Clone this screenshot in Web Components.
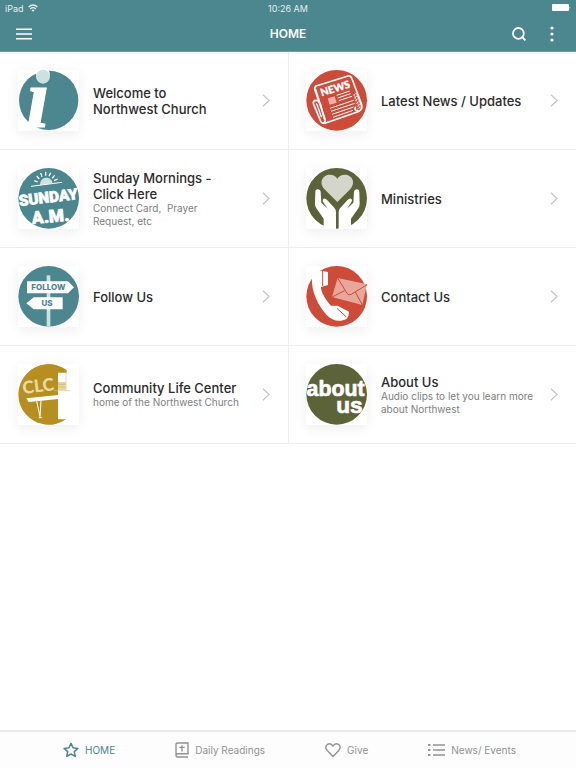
<!DOCTYPE html>
<html lang="en">
<head>
<meta charset="utf-8">
<meta name="viewport" content="width=device-width, initial-scale=1">
<title>Home</title>
<style>
  body {
    margin: 0;
    background: #fff;
    font-family: Inter, "Liberation Sans", sans-serif;
  }
</style>
</head>
<body>
<church-app>
  <status-bar slot="top" device="iPad" time="10:26 AM"></status-bar>
  <nav-bar slot="top">HOME</nav-bar>

  <home-tile href="#welcome">
    <svg slot="icon" viewBox="0 0 183 183" aria-hidden="true">
      <circle cx="92" cy="91" r="89" fill="#4c868e"/>
      <text x="24" y="172" font-family="Liberation Serif, serif" font-weight="700" font-style="italic" font-size="255" fill="#fff" stroke="#fff" stroke-width="3">i</text>
      <circle cx="75" cy="20" r="21" fill="#cfe0e3"/>
    </svg>
    Welcome to<br>Northwest Church
  </home-tile>

  <home-tile href="#news">
    <svg slot="icon" viewBox="0 0 183 183" aria-hidden="true">
      <circle cx="92" cy="91" r="91" fill="#cd4b39"/>
      <g fill="none" stroke="#fff" stroke-width="5" stroke-linejoin="round" stroke-linecap="round">
        <path d="M30 48 L126 18 Q134 16 137 24 L167 104 Q171 118 156 125 L59 159 Q46 163 43 151 L23 103 Q19 91 31 91 Q41 92 44 104 L55 146"/>
        <path d="M30 48 Q24 53 27 61 L57 147 Q60 155 53 159"/>
        <path d="M32 101 L46 140" stroke-width="4"/>
        <path d="M39 91 L29 59 M148 112 Q144 121 156 123"/>
      </g>
      <text x="47" y="79" transform="rotate(-17 47 79)" font-family="Lato, sans-serif" font-weight="900" font-size="31" fill="#fff" stroke="#fff" stroke-width="1">NEWS</text>
      <path d="M65 85 L86 79 L92 98 L71 104Z" fill="#efb1a7"/>
      <path d="M92 76 L131 63 M95 84 L134 71 M98 92 L138 79 M72 115 L143 91 M75 124 L146 100 M78 133 L143 111 M81 142 L141 121" stroke="#fff" stroke-width="3"/>
      <path d="M142 76 l8 -6 M144 85 l9 -7 M147 93 l10 -8 M149 102 l12 -9 M152 110 l12 -9 M153 118 l13 -9 M144 73 l18 43 M151 70 l14 37" stroke="#fff" stroke-width="2"/>
    </svg>
    Latest News / Updates
  </home-tile>

  <home-tile href="#sunday">
    <svg slot="icon" viewBox="0 0 183 183" aria-hidden="true">
      <circle cx="92" cy="91" r="91" fill="#4c868e"/>
      <path d="M66 51 A19 19 0 0 1 104 46Z" fill="#cfe0e3"/>
      <path d="M39 55 L132 43" stroke="#fff" stroke-width="3"/>
      <path d="M59 42 l-10 -4 M64 33 l-8 -9 M72 26 l-4 -11 M83 23 l0 -12 M93 25 l5 -11 M102 31 l8 -9 M108 38 l11 -5" stroke="#fff" stroke-width="4"/>
      <g font-family="Roboto, Liberation Sans, sans-serif" font-weight="900" fill="#fff" stroke="#fff" stroke-width="2">
        <text x="91" y="104" text-anchor="middle" transform="rotate(-7 91 91)" font-size="46">SUNDAY</text>
        <text x="98" y="163" text-anchor="middle" transform="rotate(-5 98 150)" font-size="52">A.M.</text>
      </g>
    </svg>
    Sunday Mornings -<br>Click Here
    <span slot="note">Connect Card,&nbsp; Prayer<br>Request, etc</span>
  </home-tile>

  <home-tile href="#ministries">
    <svg slot="icon" viewBox="0 0 183 183" aria-hidden="true">
      <defs>
        <path id="hand" d="M28 72 Q28 64 35 64 Q43 64 44 72 L46 104 L65 122 L53 104 Q47 95 53 92 Q58 90 64 97 L86 121 Q90 126 90 133 L90 183 L53 183 L53 152 L31 121 Q27 115 27 107Z"/>
      </defs>
      <circle cx="92" cy="91" r="91" fill="#5d6339"/>
      <path d="M94 102 L54 62 C36 38 55 20 71 20 Q87 20 94 32 Q101 20 117 20 C133 20 152 38 134 62Z" fill="#d5d6cb"/>
      <use href="#hand" fill="#fff"/>
      <use href="#hand" fill="#fff" transform="matrix(-1 0 0 1 188 0)"/>
    </svg>
    Ministries
  </home-tile>

  <home-tile href="#follow">
    <svg slot="icon" viewBox="0 0 183 183" aria-hidden="true">
      <circle cx="92" cy="91" r="91" fill="#4c868e"/>
      <path d="M86 28 H97 V182 H86Z" fill="#cfe0e3"/>
      <path d="M27 46 H150 L168 64 L150 82 H27Z M25 112 L47 94 H134 V130 H47Z" fill="#fff"/>
      <g font-family="Inter, sans-serif" font-weight="800" font-size="24" fill="#4c868e" text-anchor="middle">
        <text x="91" y="73">FOLLOW</text>
        <text x="87" y="121">US</text>
      </g>
    </svg>
    Follow Us
  </home-tile>

  <home-tile href="#contact">
    <svg slot="icon" viewBox="0 0 183 183" aria-hidden="true">
      <circle cx="92" cy="91" r="91" fill="#cd4b39"/>
      <path d="M18 31 Q30 16 45 14 L66 18 V57 L45 63 C43 76 62 106 75 119 L95 119 L129 137 Q129 151 122 158 C104 168 80 167 62 147 C36 119 14 75 18 31Z" fill="#fff"/>
      <path d="M50 14 V60 M93 127 L121 153" fill="none" stroke="#cd4b39" stroke-width="3"/>
      <path d="M95 36 L183 55 L169 117 L78 93Z" fill="#e9a79c"/>
      <path d="M95 36 L123 82 Q128 90 136 85 L183 56 M78 93 L116 74 M169 117 L148 78" fill="none" stroke="#cd4b39" stroke-width="3"/>
    </svg>
    Contact Us
  </home-tile>

  <home-tile href="#clc">
    <svg slot="icon" viewBox="0 0 183 183" aria-hidden="true">
      <path d="M146 18 A91 91 0 1 0 144 166 H120 V26 H146Z" fill="#b78f20"/>
      <path d="M120 54 H143 V78 H120Z" fill="#e5d5a6"/>
      <path d="M120 61 H143 M120 69 H143" stroke="#cfb565" stroke-width="2"/>
      <path d="M144 20 V80 M107 80 H158" stroke="#d9c27d" stroke-width="2"/>
      <path d="M25 103 L121 93 V105 L32 114Z" fill="#fff"/>
      <path d="M56 111 L66 158 M69 110 L66 158 M62 161 H72" stroke="#fff" stroke-width="3"/>
      <text x="61" y="84" text-anchor="middle" transform="rotate(-7 61 68)" font-family="Lato, sans-serif" font-weight="900" font-size="52" fill="#ead9a4">CLC</text>
    </svg>
    Community Life Center
    <span slot="note">home of the Northwest Church</span>
  </home-tile>

  <home-tile href="#about">
    <svg slot="icon" viewBox="0 0 183 183" aria-hidden="true">
      <circle cx="92" cy="91" r="91" fill="#5d6339"/>
      <g font-family="Liberation Sans, sans-serif" font-weight="700" fill="#fff" stroke="#fff" stroke-width="2" text-anchor="end">
        <text x="176" y="95" font-size="64">about</text>
        <text x="170" y="147" font-size="68">us</text>
      </g>
    </svg>
    About Us
    <span slot="note">Audio clips to let you learn more<br>about Northwest</span>
  </home-tile>

  <tab-item slot="tabs" href="#home" active>
    <svg slot="icon" width="16" height="16" viewBox="0 0 16 16" fill="none" stroke="currentColor" stroke-width="1.5" stroke-linejoin="round" aria-hidden="true">
      <path d="M8 1.4 L10 5.8 L14.9 6.4 L11.3 9.6 L12.3 14.4 L8 12 L3.7 14.4 L4.7 9.6 L1.1 6.4 L6 5.8Z"/>
    </svg>
    HOME
  </tab-item>
  <tab-item slot="tabs" href="#readings">
    <svg slot="icon" width="14" height="16" viewBox="1 0 14 16" fill="none" stroke="currentColor" stroke-width="1.4" aria-hidden="true">
      <path d="M14 15 H3.6 Q2 15 2 13.2 V2.4 Q2 1 3.6 1 H14 V11.8 H3.8 Q2 11.8 2 13.2 M8 3.2 V9.6 M5.4 5.4 H10.6"/>
    </svg>
    Daily Readings
  </tab-item>
  <tab-item slot="tabs" href="#give">
    <svg slot="icon" width="16" height="16" viewBox="0 0 16 16" fill="none" stroke="currentColor" stroke-width="1.4" stroke-linejoin="round" aria-hidden="true">
      <path d="M8 14.4 L2.2 8.4 C-.6 5.2 1.6 1.8 4.4 1.8 Q6.8 1.8 8 4.2 Q9.2 1.8 11.6 1.8 C14.4 1.8 16.6 5.2 13.8 8.4Z"/>
    </svg>
    Give
  </tab-item>
  <tab-item slot="tabs" href="#events">
    <svg slot="icon" width="17" height="16" viewBox="0 0 17 16" fill="none" stroke="currentColor" stroke-width="1.4" aria-hidden="true">
      <path d="M0 3 H2.4 M0 8 H2.4 M0 13 H2.4" stroke-width="2"/>
      <path d="M5 3 H17 M5 8 H17 M5 13 H17"/>
    </svg>
    News/ Events
  </tab-item>
</church-app>

<script>
// page frame: bars on top, two columns of tiles, tabs at the bottom
window.customElements.define(
  'church-app',
  class extends HTMLElement {
    constructor () {
      super()
      this.shadow = this.attachShadow({mode: 'open'})
    }
    connectedCallback () {
      this.shadow.innerHTML = `
        <style>
          :host {
            display: flex;
            flex-direction: column;
            min-height: 100vh;
          }
          header {
            background: #4c868e;
            border-bottom: 1px solid #729fa6;
            color: #fff;
          }
          main {
            flex: 1;
          }
          .tiles {
            display: grid;
            grid-template-columns: 1fr 1fr;
          }
          nav {
            display: flex;
            justify-content: space-evenly;
            align-items: center;
            height: 36px;
            padding-left: 3px;
            border-top: 2px solid #e9e9e9;
            background: #fdfdfd;
          }
        </style>
        <header><slot name="top"></slot></header>
        <main><div class="tiles"><slot></slot></div></main>
        <nav><slot name="tabs"></slot></nav>
      `
    }
  }
)

window.customElements.define(
  'status-bar',
  class extends HTMLElement {
    constructor () {
      super()
      this.shadow = this.attachShadow({mode: 'open'})
    }
    connectedCallback () {
      this.shadow.innerHTML = `
        <style>
          :host {
            display: grid;
            grid-template-columns: 1fr auto 1fr;
            align-items: center;
            height: 16px;
            padding: 0 5px;
            font-size: 9px;
            color: #e6f0f1;
          }
          .device {
            display: flex;
            align-items: center;
            gap: 4px;
          }
          .battery {
            justify-self: end;
          }
        </style>
        <span class="device">
          ${this.getAttribute('device')}
          <svg width="10" height="8" viewBox="0 0 10 8" fill="none" stroke="currentColor" stroke-width="1.3" aria-hidden="true">
            <path d="M.6 3 Q5 -1 9.4 3 M2.2 4.9 Q5 2.4 7.8 4.9"/>
            <path d="M5 7.8 L3.5 6.2 Q5 5 6.5 6.2Z" fill="currentColor" stroke="none"/>
          </svg>
        </span>
        <span>${this.getAttribute('time')}</span>
        <svg class="battery" width="19" height="8" viewBox="0 0 19 8" fill="#fff" aria-hidden="true">
          <rect width="17" height="7" rx="1"/>
          <path d="M17.6 2.2 Q19 3.6 17.6 5Z"/>
        </svg>
      `
    }
  }
)

window.customElements.define(
  'nav-bar',
  class extends HTMLElement {
    constructor () {
      super()
      this.shadow = this.attachShadow({mode: 'open'})
    }
    connectedCallback () {
      this.shadow.innerHTML = `
        <style>
          :host {
            display: grid;
            grid-template-columns: 1fr auto 1fr;
            align-items: center;
            height: 35px;
            padding: 0 15px;
          }
          h1 {
            margin: 0;
            font-size: 12px;
            font-weight: 600;
          }
          button {
            display: flex;
            padding: 0;
            border: 0;
            background: none;
            color: inherit;
            cursor: pointer;
          }
          .actions {
            display: flex;
            justify-content: flex-end;
            gap: 18px;
          }
        </style>
        <button aria-label="Menu">
          <svg width="18" height="16" viewBox="0 0 18 16" stroke="currentColor" stroke-width="1.6">
            <path d="M1 3.2 H17 M1 8 H17 M1 12.8 H17"/>
          </svg>
        </button>
        <h1><slot></slot></h1>
        <div class="actions">
          <button aria-label="Search">
            <svg width="16" height="16" viewBox="0 0 16 16" fill="none" stroke="currentColor" stroke-width="1.8">
              <circle cx="7.4" cy="7.4" r="5.4"/>
              <path d="M11 11 L14.4 14.4"/>
            </svg>
          </button>
          <button aria-label="More">
            <svg width="16" height="16" viewBox="0 0 16 16" fill="currentColor">
              <circle cx="7" cy="2" r="1.6"/><circle cx="7" cy="8" r="1.6"/><circle cx="7" cy="14" r="1.6"/>
            </svg>
          </button>
        </div>
      `
    }
  }
)

// one entry of the grid: icon, title, optional note, chevron
window.customElements.define(
  'home-tile',
  class extends HTMLElement {
    constructor () {
      super()
      this.shadow = this.attachShadow({mode: 'open'})
    }
    connectedCallback () {
      this.shadow.innerHTML = `
        <style>
          :host {
            display: block;
            border-bottom: 1px solid #eee;
          }
          :host(:nth-of-type(even)) {
            border-left: 1px solid #eee;
          }
          a {
            display: flex;
            align-items: center;
            gap: 14px;
            height: 97px;
            padding: 0 18px;
            color: #2a2a2a;
            text-decoration: none;
          }
          :host(:nth-of-type(even)) a {
            padding-left: 17px;
          }
          ::slotted(svg) {
            display: block;
            flex: none;
            width: 61px;
            height: 61px;
            overflow: visible;
            background: #fff;
            box-shadow: 0 3px 12px rgba(0, 0, 0, 0.07);
          }
          .label {
            flex: 1;
            white-space: nowrap;
          }
          .title {
            font-size: 13px;
            font-weight: 500;
            line-height: 16px;
          }
          .note {
            font-size: 10px;
            line-height: 13px;
            color: #808080;
          }
          .title, .note {
            display: block;
          }
        </style>
        <a href="${this.getAttribute('href')}">
          <slot name="icon"></slot>
          <span class="label">
            <span class="title"><slot></slot></span>
            <span class="note"><slot name="note"></slot></span>
          </span>
          <svg width="8" height="13" viewBox="0 0 8 13" fill="none" stroke="#c4c4c4" stroke-width="1.2" aria-hidden="true">
            <path d="M1 .8 L7 6.5 L1 12.2"/>
          </svg>
        </a>
      `
    }
  }
)

window.customElements.define(
  'tab-item',
  class extends HTMLElement {
    constructor () {
      super()
      this.shadow = this.attachShadow({mode: 'open'})
    }
    connectedCallback () {
      this.shadow.innerHTML = `
        <style>
          :host {
            display: block;
            color: #929292;
          }
          :host([active]) {
            color: #4c868e;
          }
          a {
            display: flex;
            align-items: center;
            gap: 6px;
            font-size: 10px;
            color: inherit;
            text-decoration: none;
          }
        </style>
        <a href="${this.getAttribute('href')}"><slot name="icon"></slot><span><slot></slot></span></a>
      `
    }
  }
)
</script>
</body>
</html>
